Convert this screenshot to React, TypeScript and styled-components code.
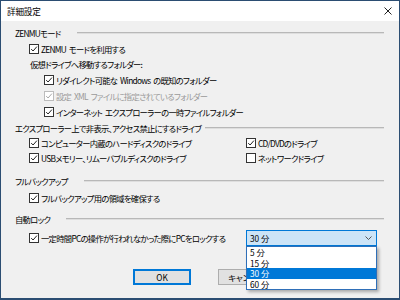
import React from "react";
import styled, { createGlobalStyle } from "styled-components";

const Global = createGlobalStyle`
  html, body { margin: 0; padding: 0; background: #ffffff; }
  body {
    font-family: "Noto Sans CJK JP", "Noto Sans", sans-serif;
    font-size: 8.3px;
    letter-spacing: -0.7px;
    word-spacing: 1.6px;
    color: #000;
  }
  * { box-sizing: border-box; }
`;

const Window = styled.div`
  width: 400px;
  height: 300px;
  display: flex;
  flex-direction: column;
  border: 1px solid #2b4d72;
  border-bottom-width: 2px;
  background: #f0f0f0;
  font-feature-settings: "palt";
`;

const TitleBar = styled.div`
  height: 20px;
  flex: none;
  background: #ffffff;
  display: flex;
  align-items: center;
  justify-content: space-between;
  padding: 0 7px 0 6px;
`;

const Title = styled.span`
  font-size: 8.6px;
  letter-spacing: -0.2px;
  color: #000;
`;

const Body = styled.div`
  flex: 1;
  display: flex;
  flex-direction: column;
  padding: 4px 15px 0 14px;
`;

const Header = styled.div<{ $h: number; $mt?: number }>`
  display: flex;
  align-items: center;
  height: ${(p) => p.$h}px;
  margin-top: ${(p) => p.$mt ?? 0}px;
`;

const Rule = styled.div<{ $gap: number }>`
  flex: 1;
  height: 2px;
  margin-left: ${(p) => p.$gap}px;
  border-top: 1px solid #b8b8b8;
  border-bottom: 1px solid #dedede;
`;

const Row = styled.div<{ $h: number; $indent: number; $mt?: number }>`
  display: flex;
  align-items: center;
  gap: 2px;
  height: ${(p) => p.$h}px;
  padding-left: ${(p) => p.$indent}px;
  margin-top: ${(p) => p.$mt ?? 0}px;
  white-space: nowrap;
`;

const Label = styled.span<{ $disabled?: boolean }>`
  color: ${(p) => (p.$disabled ? "#9a9a9a" : "#000")};
`;

const Box = styled.span<{ $disabled?: boolean }>`
  width: 10px;
  height: 10px;
  flex: none;
  border: 1px solid ${(p) => (p.$disabled ? "#bcbcbc" : "#333")};
  background: #fff;
  display: inline-flex;
  align-items: center;
  justify-content: center;
`;

const Grid = styled.div<{ $h: number; $mt?: number }>`
  display: grid;
  grid-template-columns: 217px 131px;
  grid-auto-rows: ${(p) => p.$h}px;
  align-items: center;
  padding-left: 14px;
  margin-top: ${(p) => p.$mt ?? 0}px;
`;

const Cell = styled.div`
  display: flex;
  align-items: center;
  gap: 2px;
  white-space: nowrap;
`;

const SelectWrap = styled.div`
  position: relative;
  height: 16px;
`;

const SelectBox = styled.div`
  height: 16px;
  border: 1px solid #0078d7;
  background: #cce4f7;
  display: flex;
  align-items: center;
  justify-content: space-between;
  padding: 0 4px 0 3px;
  letter-spacing: 0;
  word-spacing: 0;
`;

const List = styled.div`
  position: absolute;
  top: 16px;
  left: 0;
  width: 131px;
  background: #fff;
  border: 1px solid #2f6fb8;
  box-shadow: 2px 2px 3px rgba(0, 0, 0, 0.3);
  z-index: 2;
  letter-spacing: 0;
  word-spacing: 0;
`;

const Item = styled.div<{ $sel?: boolean }>`
  height: 10.5px;
  line-height: 10.5px;
  padding-left: 3px;
  background: ${(p) => (p.$sel ? "#0078d7" : "transparent")};
  color: ${(p) => (p.$sel ? "#fff" : "#000")};
`;

const Buttons = styled.div`
  display: flex;
  gap: 27px;
  padding-left: 118px;
  margin-top: 23px;
`;

const Button = styled.div<{ $default?: boolean }>`
  width: 58px;
  height: 16px;
  display: flex;
  align-items: center;
  justify-content: center;
  background: #e1e1e1;
  letter-spacing: 0;
  border: 1px solid ${(p) => (p.$default ? "#0078d7" : "#adadad")};
  box-shadow: ${(p) => (p.$default ? "inset 0 0 0 1px #0078d7" : "none")};
`;

const Check: React.FC<{ disabled?: boolean; checked?: boolean }> = ({ disabled, checked = true }) => (
  <Box $disabled={disabled}>
    {checked && (
      <svg width="8" height="8" viewBox="0 0 8 8">
        <path d="M1.2 4.1 L3.1 6 L6.9 1.6" fill="none" stroke={disabled ? "#a8a8a8" : "#222"} strokeWidth="1" />
      </svg>
    )}
  </Box>
);

export default function App() {
  return (
    <>
      <Global />
      <Window>
        <TitleBar>
          <Title>詳細設定</Title>
          <svg width="8" height="8" viewBox="0 0 8 8">
            <path d="M0.5 0.5 L7.5 7.5 M7.5 0.5 L0.5 7.5" stroke="#222" strokeWidth="1" />
          </svg>
        </TitleBar>
        <Body>
          <Header $h={16}>
            <span>ZENMUモード</span>
            <Rule $gap={16} />
          </Header>
          <Row $h={15} $indent={14}>
            <Check />
            <Label>ZENMU モードを利用する</Label>
          </Row>
          <Row $h={16} $indent={15}>
            <Label>仮想ドライブへ移動するフォルダー:</Label>
          </Row>
          <Row $h={16} $indent={29}>
            <Check />
            <Label>リダイレクト可能な Windows の既知のフォルダー</Label>
          </Row>
          <Row $h={16} $indent={29}>
            <Check disabled />
            <Label $disabled>設定 XML ファイルに指定されているフォルダー</Label>
          </Row>
          <Row $h={16} $indent={29}>
            <Check />
            <Label>インターネット エクスプローラーの一時ファイルフォルダー</Label>
          </Row>
          <Header $h={15}>
            <span>エクスプローラー上で非表示、アクセス禁止にするドライブ</span>
            <Rule $gap={4} />
          </Header>
          <Grid $h={15}>
            <Cell>
              <Check />
              <Label>コンピューター内蔵のハードディスクのドライブ</Label>
            </Cell>
            <Cell>
              <Check />
              <Label>CD/DVDのドライブ</Label>
            </Cell>
            <Cell>
              <Check />
              <Label>USBメモリー、リムーバブルディスクのドライブ</Label>
            </Cell>
            <Cell>
              <Check checked={false} />
              <Label>ネットワークドライブ</Label>
            </Cell>
          </Grid>
          <Header $h={16} $mt={8}>
            <span>フルバックアップ</span>
            <Rule $gap={16} />
          </Header>
          <Row $h={16} $indent={14} $mt={1}>
            <Check />
            <Label>フルバックアップ用の領域を確保する</Label>
          </Row>
          <Header $h={16} $mt={5}>
            <span>自動ロック</span>
            <Rule $gap={16} />
          </Header>
          <Grid $h={16} $mt={3}>
            <Cell>
              <Check />
              <Label>一定時間PCの操作が行われなかった際にPCをロックする</Label>
            </Cell>
            <SelectWrap>
              <SelectBox>
                <span>30 分</span>
                <svg width="7" height="4" viewBox="0 0 7 4">
                  <path d="M0.5 0.5 L3.5 3.5 L6.5 0.5" fill="none" stroke="#555" strokeWidth="1" />
                </svg>
              </SelectBox>
              <List>
                <Item>5 分</Item>
                <Item>15 分</Item>
                <Item $sel>30 分</Item>
                <Item>60 分</Item>
              </List>
            </SelectWrap>
          </Grid>
          <Buttons>
            <Button $default>OK</Button>
            <Button>キャンセル</Button>
          </Buttons>
        </Body>
      </Window>
    </>
  );
}
